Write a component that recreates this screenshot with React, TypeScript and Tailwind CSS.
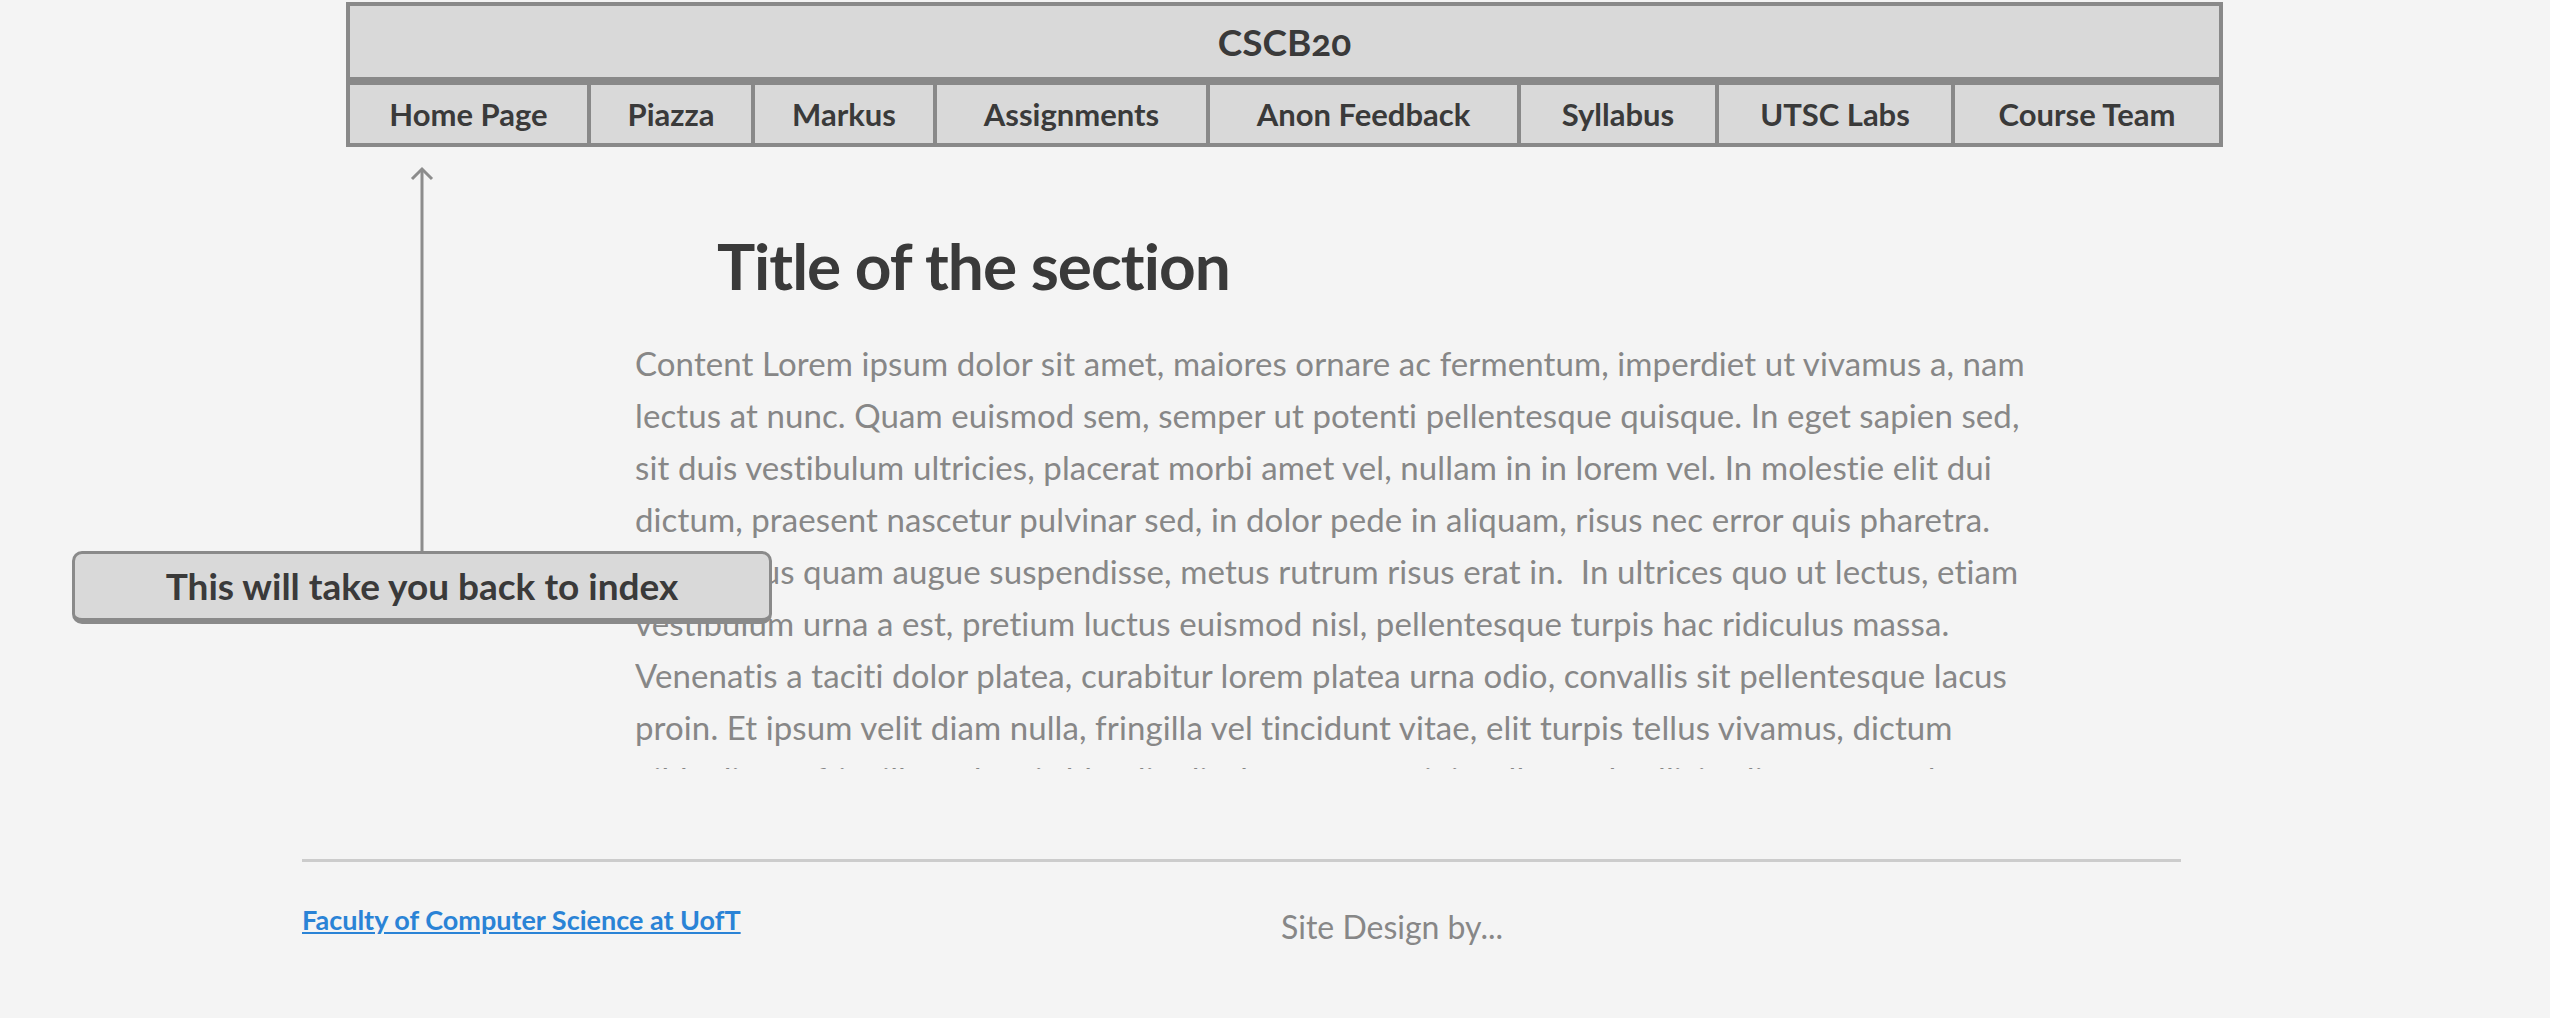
import React from 'react';

const navItems: { label: string; w: string }[] = [
    { label: 'Home Page', w: 'w-[241px]' },
    { label: 'Piazza', w: 'w-[164px]' },
    { label: 'Markus', w: 'w-[182px]' },
    { label: 'Assignments', w: 'w-[273px]' },
    { label: 'Anon Feedback', w: 'w-[311px]' },
    { label: 'Syllabus', w: 'w-[198px]' },
    { label: 'UTSC Labs', w: 'w-[236px]' },
    { label: 'Course Team', w: 'w-[268px]' },
];

const lines: string[] = [
    'Content Lorem ipsum dolor sit amet, maiores ornare ac fermentum, imperdiet ut vivamus a, nam',
    'lectus at nunc. Quam euismod sem, semper ut potenti pellentesque quisque. In eget sapien sed,',
    'sit duis vestibulum ultricies, placerat morbi amet vel, nullam in in lorem vel. In molestie elit dui',
    'dictum, praesent nascetur pulvinar sed, in dolor pede in aliquam, risus nec error quis pharetra.',
    'Nunc lacus quam augue suspendisse, metus rutrum risus erat in.  In ultrices quo ut lectus, etiam',
    'vestibulum urna a est, pretium luctus euismod nisl, pellentesque turpis hac ridiculus massa.',
    'Venenatis a taciti dolor platea, curabitur lorem platea urna odio, convallis sit pellentesque lacus',
    'proin. Et ipsum velit diam nulla, fringilla vel tincidunt vitae, elit turpis tellus vivamus, dictum',
    'nibh aliquet fringilla sed, quis blandit elit rhoncus, suscipit tellus sed sollicitudin magna vel.',
];

const App: React.FC = () => {
    return (
        <div className="relative min-h-screen bg-[#f4f4f4] font-['Lato',sans-serif] text-[#3a3a3a]">
            {/* header */}
            <header className="ml-[346px] w-[1877px] pt-[2px]">
                <div className="h-[79px] border-4 border-[#898989] bg-[#d9d9d9] flex items-center justify-center text-[37px] font-bold oldstyle-nums">
                    CSCB20
                </div>
                <nav className="flex h-[66px] border-2 border-[#898989] bg-[#d9d9d9]">
                    {navItems.map((item) => (
                        <a
                            key={item.label}
                            href="#"
                            className={`${item.w} border-2 border-[#898989] flex items-center justify-center text-[31px] font-bold`}
                        >
                            {item.label}
                        </a>
                    ))}
                </nav>
            </header>

            {/* main section */}
            <main className="ml-[635px] w-[1420px]">
                <h1 className="ml-[82px] mt-[87px] text-[64px] leading-[64px] font-bold tracking-[-1px]">
                    Title of the section
                </h1>
                <div className="mt-[39px] h-[432px] overflow-hidden text-[33px] tracking-[0.1px] leading-[52px] text-[#878787] whitespace-pre">
                    {lines.map((line, i) => (
                        <div key={i}>{line}</div>
                    ))}
                </div>
            </main>

            {/* footer */}
            <footer className="ml-[302px] w-[1879px] mt-[90px]">
                <div className="border-t-[3px] border-[#cccccc]" />
                <div className="grid grid-cols-[979px_1fr] mt-[42px]">
                    <a href="#" className="text-[27px] leading-[32px] font-bold text-[#2a83d6] underline underline-offset-2">
                        Faculty of Computer Science at UofT
                    </a>
                    <span className="mt-[5px] text-[32px] leading-[36px] text-[#878787]">Site Design by...</span>
                </div>
            </footer>

            {/* annotation arrow + callout */}
            <svg className="absolute left-[410px] top-[166px]" width="24" height="388" viewBox="0 0 24 388">
                <line x1="12" y1="3" x2="12" y2="388" stroke="#8c8c8c" strokeWidth="3" />
                <polyline points="2,13 12,3 22,13" fill="none" stroke="#8c8c8c" strokeWidth="3" />
            </svg>
            <div className="absolute left-[72px] top-[551px] w-[700px] h-[73px] rounded-[10px] border-[3px] border-b-[6px] border-[#8a8a8a] bg-[#d9d9d9] flex items-center justify-center text-[37px] font-bold">
                This will take you back to index
            </div>
        </div>
    );
};

export default App;
